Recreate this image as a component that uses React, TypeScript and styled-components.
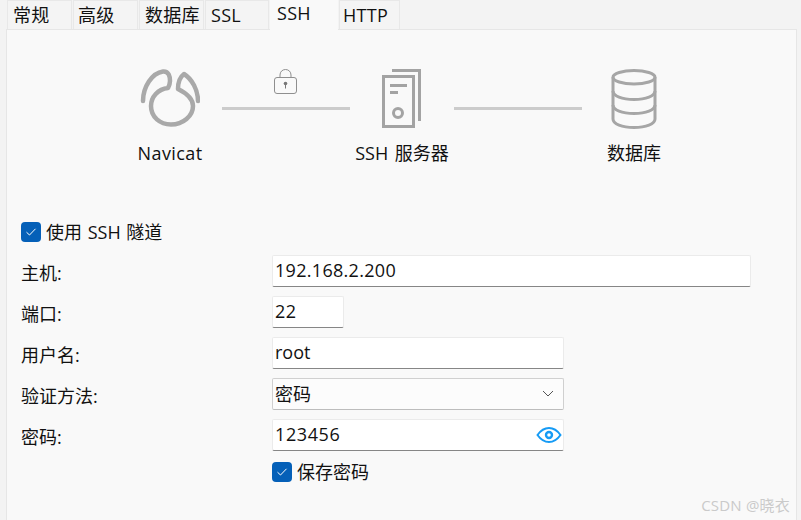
import styled, { createGlobalStyle } from 'styled-components';

const GlobalStyle = createGlobalStyle`
	html, body {
		margin: 0;
		padding: 0;
		width: 801px;
		height: 520px;
		overflow: hidden;
		background: #f3f3f3;
		color: #111;
		font-family: 'Open Sans', 'Noto Sans CJK SC', sans-serif;
		font-size: 18px;
	}
	* { box-sizing: border-box; }
`;

const Window = styled.div`
	position: relative;
	width: 801px;
	height: 520px;
	display: flex;
	flex-direction: column;
	padding-left: 6px;
	padding-right: 4px;
`;

const TabBar = styled.div`
	display: flex;
	height: 30px;
	padding-left: 1px;
	gap: 1px;
`;

const Tab = styled.div<{ $w: number; $pad: number; $active?: boolean }>`
	width: ${ ( p ) => p.$w }px;
	height: ${ ( p ) => ( p.$active ? 30 : 29 ) }px;
	padding-left: ${ ( p ) => p.$pad }px;
	line-height: ${ ( p ) => ( p.$active ? 26 : 29 ) }px;
	letter-spacing: 0.3px;
	white-space: nowrap;
	background: ${ ( p ) => ( p.$active ? '#f9f9f9' : '#f4f4f4' ) };
	border: 1px solid #e8e8e8;
	border-bottom: none;
	border-width: ${ ( p ) => ( p.$active ? 0 : 1 ) }px;
	z-index: ${ ( p ) => ( p.$active ? 1 : 0 ) };
`;

const Panel = styled.div`
	flex: 1;
	margin-top: -1px;
	background: #f9f9f9;
	border: 1px solid #e6e6e6;
	border-bottom: none;
	display: flex;
	flex-direction: column;
	padding: 39px 0 0 14px;
`;

const Diagram = styled.div`
	display: flex;
	padding-left: 97px;
	height: 153px;
`;

const Node = styled.div<{ $track?: number }>`
	width: 104px;
	display: flex;
	flex-direction: column;
	align-items: center;
	gap: 11px;
	white-space: nowrap;
	line-height: 26px;
	letter-spacing: ${ ( p ) => p.$track ?? 0 }px;
	word-spacing: 2px;

	svg {
		display: block;
	}
`;

const Connector = styled.div`
	position: relative;
	width: 128px;
	height: 62px;
	display: flex;
	align-items: flex-end;
	padding-bottom: 21px;

	svg {
		position: absolute;
		left: 52px;
		top: 0;
	}
`;

const Line = styled.div`
	width: 100%;
	height: 3px;
	background: #cccccc;
`;

const CheckRow = styled.label`
	display: flex;
	align-items: center;
	gap: 5px;
	height: 20px;
	line-height: 22px;
	word-spacing: 1px;
`;

const Box = styled.span`
	width: 20px;
	height: 20px;
	border-radius: 4px;
	background: #0560b8;
	display: flex;
	align-items: center;
	justify-content: center;
`;

const Form = styled.div`
	display: grid;
	grid-template-columns: 251px 1fr;
	row-gap: 9px;
	margin-top: 13px;
`;

const Label = styled.div`
	height: 32px;
	line-height: 37px;
`;

const Field = styled.div<{ $w: number; $track?: number; $select?: boolean }>`
	position: relative;
	width: ${ ( p ) => p.$w }px;
	height: 32px;
	padding-left: 2px;
	line-height: ${ ( p ) => ( p.$select ? 30 : 28 ) }px;
	letter-spacing: ${ ( p ) => p.$track ?? 0 }px;
	background: ${ ( p ) => ( p.$select ? '#fcfcfc' : '#ffffff' ) };
	border: 1px solid ${ ( p ) => ( p.$select ? '#d0d0d0' : '#ebebeb' ) };
	border-bottom: ${ ( p ) => ( p.$select ? '1px solid #bdbdbd' : '1px solid #868686' ) };
	border-radius: 2px;

	svg {
		position: absolute;
	}
`;

const Chevron = styled.svg`
	right: 9px;
	top: 11px;
`;

const Eye = styled.svg`
	right: 1px;
	top: 5px;
`;

const SaveRow = styled( CheckRow )`
	grid-column: 2;
	margin-top: 2px;
`;

const Watermark = styled.div`
	position: absolute;
	right: 11px;
	bottom: 6px;
	font-size: 15px;
	line-height: 18px;
	letter-spacing: 0.2px;
	color: #cacaca;
`;

const tabs = [
	{ name: '常规', w: 65, pad: 5 },
	{ name: '高级', w: 65, pad: 4 },
	{ name: '数据库', w: 65, pad: 5 },
	{ name: 'SSL', w: 64, pad: 5 },
	{ name: 'SSH', w: 68, pad: 7, active: true },
	{ name: 'HTTP', w: 61, pad: 3 },
];

const CheckIcon = () => (
	<svg width="12" height="10" viewBox="0 0 12 10" fill="none">
		<path d="M1.5 5.2 4.5 8 10.5 1.8" stroke="#fff" strokeWidth="1" />
	</svg>
);

const NavicatIcon = () => (
	<svg width="60" height="60" viewBox="0 0 60 60" fill="none" stroke="#a9a9a9" strokeWidth="4.500" strokeLinecap="round" strokeLinejoin="round">
		<path d="M3 32C3 18 12 4 23 2.500C29 2 30 8 30 12C30 15 29 17 28 19C18 20 11 28 11 37C11 48 20 55.500 31 55.500C43 55.500 53 47 53 37C53 30 46 24 38 20C38 14 40 8 44 5C52 10 58 21 58 32" />
	</svg>
);

const ServerIcon = () => (
	<svg width="40" height="60" viewBox="0 0 40 60" fill="none" stroke="#a3a3a3" strokeWidth="3">
		<path d="M1.500 7.500H31.500V57.500H1.500Z" />
		<path d="M10 1.500H37.500V52" />
		<path d="M8 16.500H25M8 23.500H16" />
		<circle cx="16" cy="44" r="4.500" />
	</svg>
);

const DatabaseIcon = () => (
	<svg width="46" height="60" viewBox="0 0 46 60" fill="none" stroke="#a6a6a6" strokeWidth="3">
		<ellipse cx="23" cy="8.250" rx="21" ry="6.750" />
		<path d="M2 8.250V50C2 55 11 58.500 23 58.500S44 55 44 50V8.250" />
		<path d="M2 22C2 27 11 30.500 23 30.500S44 27 44 22" />
		<path d="M2 36C2 41 11 44.500 23 44.500S44 41 44 36" />
	</svg>
);

const LockIcon = () => (
	<svg width="24" height="26" viewBox="0 0 24 26" fill="none" stroke="#8f8f8f" strokeWidth="1">
		<rect x="0.500" y="8.500" width="22" height="16" rx="2.500" />
		<path d="M6 8.500V6C6 2.800 8.300 0.500 11.500 0.500S17 2.800 17 6V8.500" />
		<circle cx="11.500" cy="14.500" r="1.800" fill="#777" stroke="none" />
		<path d="M11.500 15V19.500" stroke="#777" />
	</svg>
);

export default function App() {
	return (
		<Window>
			<GlobalStyle />
			<TabBar>
				{ tabs.map( ( tab ) => (
					<Tab key={ tab.name } $w={ tab.w } $pad={ tab.pad } $active={ tab.active }>
						{ tab.name }
					</Tab>
				) ) }
			</TabBar>
			<Panel>
				<Diagram>
					<Node $track={ 0.4 }>
						<NavicatIcon />
						Navicat
					</Node>
					<Connector>
						<LockIcon />
						<Line />
					</Connector>
					<Node>
						<ServerIcon />
						SSH 服务器
					</Node>
					<Connector>
						<Line />
					</Connector>
					<Node>
						<DatabaseIcon />
						数据库
					</Node>
				</Diagram>
				<CheckRow>
					<Box>
						<CheckIcon />
					</Box>
					使用 SSH 隧道
				</CheckRow>
				<Form>
					<Label>主机:</Label>
					<Field $w={ 479 } $track={ 0.3 }>192.168.2.200</Field>
					<Label>端口:</Label>
					<Field $w={ 72 } $track={ 0.5 }>22</Field>
					<Label>用户名:</Label>
					<Field $w={ 292 }>root</Field>
					<Label>验证方法:</Label>
					<Field $w={ 292 } $select>
						密码
						<Chevron width="12" height="7" viewBox="0 0 12 7" fill="none">
							<path d="M1 1 6 6 11 1" stroke="#555" strokeWidth="1" />
						</Chevron>
					</Field>
					<Label>密码:</Label>
					<Field $w={ 292 } $track={ 0.6 }>
						123456
						<Eye width="26" height="20" viewBox="0 0 26 20" fill="none" stroke="#169bf5">
							<path d="M1.500 10C5 5 9 3 13 3S21 5 24.500 10C21 15 17 17 13 17S5 15 1.500 10Z" strokeWidth="2" />
							<circle cx="13" cy="10" r="3" strokeWidth="2.400" />
						</Eye>
					</Field>
					<SaveRow>
						<Box>
							<CheckIcon />
						</Box>
						保存密码
					</SaveRow>
				</Form>
			</Panel>
			<Watermark>CSDN @晓衣</Watermark>
		</Window>
	);
}
